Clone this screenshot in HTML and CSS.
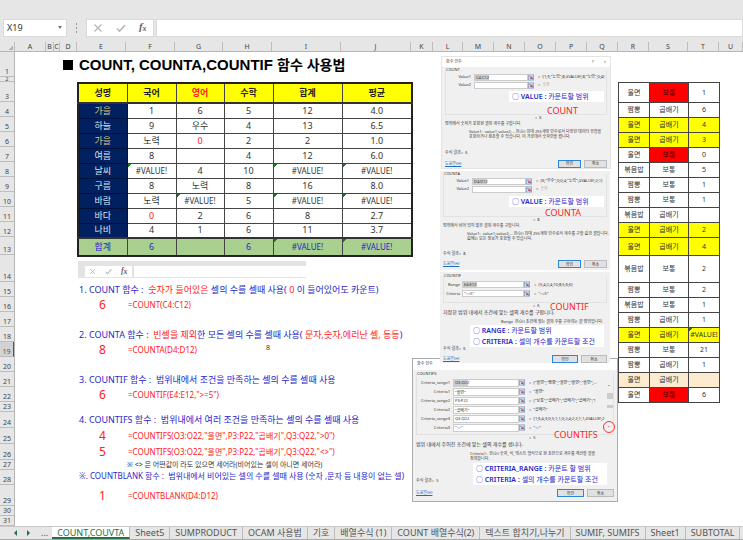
FILE: index.html
```html
<!DOCTYPE html>
<html lang="ko">
<head>
<meta charset="utf-8">
<title>COUNT, COUNTA, COUNTIF 함수 사용법</title>
<link rel="stylesheet" href="styles.css">
</head>
<body>
<svg class="defs" aria-hidden="true">
  <symbol id="cancel" viewBox="0 0 10 10"><path d="M1.5 1.5l7 7M8.500 1.500l-7 7" fill="none" stroke="#b4b4b4" stroke-width="1.200"/></symbol>
  <symbol id="enter" viewBox="0 0 10 10"><path d="M1 5.500l2.600 2.700L9.200 2" fill="none" stroke="#b4b4b4" stroke-width="1.500"/></symbol>
  <symbol id="ref" viewBox="0 0 8 8"><rect x=".5" y=".5" width="7" height="7" fill="#d5e0ef" stroke="#7f9fc4"/><path d="M2 2l3 3M5.300 2.800v2.500H2.800" stroke="#b5404a" stroke-width="1.200" fill="none"/><path d="M5 6h2" stroke="#3a66a8"/></symbol>
</svg>
<div class="app">
  <header class="bar">
    <label class="namebox"><input aria-label="이름 상자" value="X19"><span class="caret"></span></label>
    <span class="grip"></span>
    <div class="tools">
      <button aria-label="취소"><svg><use href="#cancel"/></svg></button>
      <button aria-label="입력"><svg><use href="#enter"/></svg></button>
      <button class="fx" aria-label="함수 삽입">f<sub>x</sub></button>
    </div>
    <input class="formula" aria-label="수식 입력줄">
  </header>

  <div class="cols">
    <span class="corner"></span><span>A</span><span>B</span><span>C</span><span>D</span><span>E</span><span>F</span><span>G</span><span>H</span><span>I</span><span>J</span><span>K</span><span>L</span><span>M</span><span>N</span><span>O</span><span>P</span><span>Q</span><span>R</span><span>S</span><span>T</span><span>U</span>
  </div>

  <main class="sheet">
    <div class="rows">
      <span>1</span><span class="thin">2</span><span>3</span><span>4</span><span>5</span><span>6</span><span>7</span><span>8</span><span>9</span><span>10</span><span>11</span><span>12</span><span>13</span><span>14</span><span>15</span><span>16</span><span>17</span><span>18</span><span class="current">19</span><span>20</span><span>21</span><span>22</span><span>23</span><span>24</span><span>25</span><span>26</span><span>27</span><span>28</span><span>29</span><span>30</span><span>31</span>
    </div>

    <h1><i></i><span>COUNT, COUNTA,COUNTIF <small>함수 사용법</small></span></h1>

    <table class="scores">
      <colgroup><col class="c-e"><col class="c-f"><col class="c-g"><col class="c-h"><col class="c-i"><col class="c-j"></colgroup>
      <thead><tr class="tall"><th>성명</th><th>국어</th><th class="red">영어</th><th>수학</th><th>합계</th><th>평균</th></tr></thead>
      <tbody>
        <tr><th class="gold">가을</th><td>1</td><td>6</td><td>5</td><td>12</td><td>4.0</td></tr>
        <tr><th>하늘</th><td>9</td><td>우수</td><td>4</td><td>13</td><td>6.5</td></tr>
        <tr><th class="gold">가을</th><td>노력</td><td class="red">0</td><td>2</td><td>2</td><td>1.0</td></tr>
        <tr><th>여름</th><td>8</td><td></td><td>4</td><td>12</td><td>6.0</td></tr>
        <tr><th>날씨</th><td class="err">#VALUE!</td><td>4</td><td>10</td><td class="err">#VALUE!</td><td class="err">#VALUE!</td></tr>
        <tr><th>구름</th><td>8</td><td>노력</td><td>8</td><td>16</td><td>8.0</td></tr>
        <tr><th>바람</th><td>노력</td><td class="err">#VALUE!</td><td>5</td><td class="err">#VALUE!</td><td class="err">#VALUE!</td></tr>
        <tr><th>바다</th><td class="red">0</td><td>2</td><td>6</td><td>8</td><td>2.7</td></tr>
        <tr><th>나비</th><td>4</td><td>1</td><td>6</td><td>11</td><td>3.7</td></tr>
      </tbody>
      <tfoot><tr class="mid"><th>합계</th><td>6</td><td></td><td>6</td><td class="err">#VALUE!</td><td class="err">#VALUE!</td></tr></tfoot>
    </table>

    <div class="minibar">
      <div><svg><use href="#cancel"/></svg><svg><use href="#enter"/></svg><em>f<sub>x</sub></em></div>
      <span></span>
    </div>

    <p class="note r15">1. COUNT 함수 :  <b>숫자가 들어있은</b> 셀의 수를 셀때 사용( <b>0</b> 이 들어있어도 카운트)</p>
    <p class="result r16"><strong>6</strong><span>=COUNT(C4:C12)</span></p>
    <p class="note r18">2. COUNTA 함수 :  <b>빈셀을 제외</b>한 모든 셀의 수를 셀때 사용( <b>문자,숫자,에러난 셀, 등등</b>)</p>
    <p class="result r19"><strong>8</strong><span>=COUNTA(D4:D12)</span></p>
    <p class="stray r19">8</p>
    <p class="note r21">3. COUNTIF 함수 :  범위내에서 조건을 만족하는 셀의 수를 셀때 사용</p>
    <p class="result r22"><strong>6</strong><span>=COUNTIF(E4:E12,"&gt;=5")</span></p>
    <p class="note r24">4. COUNTIFS 함수 :  범위내에서 여러 조건을 만족하는 셀의 수를 셀때 사용</p>
    <p class="result r25"><strong>4</strong><span>=COUNTIFS(O3:O22,"울면",P3:P22,"곱배기",Q3:Q22,"&gt;0")</span></p>
    <p class="result r26"><strong>5</strong><span>=COUNTIFS(O3:O22,"울면",P3:P22,"곱배기",Q3:Q22,"&lt;&gt;")</span></p>
    <p class="remark r27">※ &lt;&gt; 은 어떤값이 라도 있으면 세어라(비어있는 셀이 아니면 세어라)</p>
    <p class="note small r28">※. COUNTBLANK 함수 :  범위내에서 비어있는 셀의 수를 셀때 사용 (숫자 ,문자 등 내용이 없는 셀)</p>
    <p class="result r29"><strong>1</strong><span>=COUNTBLANK(D4:D12)</span></p>

    <div class="dialogs">
      <section class="dialog count">
        <div class="caption"><span>함수 인수</span><span>?</span><span>×</span></div>
        <fieldset>
          <legend>COUNT</legend>
          <div class="arg"><label for="a1">Value1</label><input id="a1" class="sel" value="C4:C12"><svg><use href="#ref"/></svg><output>=&nbsp; {1;9;"노력";8;#VALUE!;8;"노력";0;4}</output></div>
          <div class="arg"><label for="a2">Value2</label><input id="a2"><svg><use href="#ref"/></svg><output>=&nbsp; <i>숫자</i></output></div>
        </fieldset>
        <p class="equals">=&nbsp; 6</p>
        <p>범위에서 숫자가 포함된 셀의 개수를 구합니다.</p>
        <p class="help">Value1:&nbsp; value1;value2;... 은(는) 최대 255개의 인수로서 다양한 데이터 유형을<br>포함하거나 참조할 수 있습니다. 이 가운데서 숫자만을 셉니다.</p>
        <p class="answer">수식 결과=&nbsp; 6</p>
        <div class="foot"><a href="#">도움말(H)</a><button class="ok">확인</button><button>취소</button></div>
        <div class="tip">○ <b>VALUE :</b> 카운트할 범위</div>
        <div class="fname">COUNT</div>
      </section>

      <section class="dialog counta">
        <fieldset>
          <legend>COUNTA</legend>
          <div class="arg"><label for="b1">Value1</label><input id="b1" class="sel" value="D4:D12"><svg><use href="#ref"/></svg><output>=&nbsp; {6;"우수";0;0;4;"노력";#VALUE!;2;1}</output></div>
          <div class="arg"><label for="b2">Value2</label><input id="b2"><svg><use href="#ref"/></svg><output>=&nbsp; <i>숫자</i></output></div>
        </fieldset>
        <p class="equals">=&nbsp; 8</p>
        <p>범위에서 비어 있지 않은 셀의 개수를 구합니다.</p>
        <p class="help">Value1:&nbsp; value1;value2;... 은(는) 최대 255개의 인수로서 개수를 구할 값과 셀입니다.<br>값에는 모든 정보가 포함될 수 있습니다.</p>
        <p class="answer">수식 결과=&nbsp; 8</p>
        <div class="foot"><a href="#">도움말(H)</a><button class="ok">확인</button><button>취소</button></div>
        <div class="tip">○ <b>VALUE :</b> 카운트할 범위</div>
        <div class="fname">COUNTA</div>
      </section>

      <section class="dialog countif">
        <fieldset>
          <legend>COUNTIF</legend>
          <div class="arg"><label for="c1">Range</label><input id="c1" class="sel" value="E4:E12"><svg><use href="#ref"/></svg><output>=&nbsp; {5;4;2;4;10;8;5;6;6}</output></div>
          <div class="arg"><label for="c2">Criteria</label><input id="c2" value='"&gt;=5"'><svg><use href="#ref"/></svg><output>=&nbsp; "&gt;=5"</output></div>
        </fieldset>
        <p class="equals">=&nbsp; 6</p>
        <p class="desc">지정한 범위 내에서 조건에 맞는 셀의 개수를 구합니다.</p>
        <p class="help">Range&nbsp; 은(는) 조건에 맞는 셀의 수를 구하려는 셀 범위입니다.</p>
        <p class="answer">수식 결과=&nbsp; 6</p>
        <div class="foot"><a href="#">도움말(H)</a><button class="ok">확인</button><button>취소</button></div>
        <div class="tip">○ <b>RANGE :</b> 카운트할 범위<br>○ <b>CRITERIA :</b> 셀의 개수를 카운트할 조건</div>
        <div class="fname">COUNTIF</div>
      </section>

      <section class="dialog countifs">
        <div class="caption"><span>함수 인수</span></div>
        <fieldset>
          <legend>COUNTIFS</legend>
          <div class="arg"><label for="d1">Criteria_range1</label><input id="d1" class="sel" value="O3:O22"><svg><use href="#ref"/></svg><output>=&nbsp; {"울면";"짬뽕";"울면";"울면";"울면";...</output></div>
          <div class="arg"><label for="d2">Criteria1</label><input id="d2" value='"울면"'><svg><use href="#ref"/></svg><output>=&nbsp; "울면"</output></div>
          <div class="arg"><label for="d3">Criteria_range2</label><input id="d3" value="P3:P22"><svg><use href="#ref"/></svg><output>=&nbsp; {"보통";"곱배기";"곱배기";"곱배기";"!</output></div>
          <div class="arg"><label for="d4">Criteria2</label><input id="d4" value='"곱배기"'><svg><use href="#ref"/></svg><output>=&nbsp; "곱배기"</output></div>
          <div class="arg"><label for="d5">Criteria_range3</label><input id="d5" value="Q3:Q22"><svg><use href="#ref"/></svg><output>=&nbsp; {1;6;4;3;0;5;1;1;0;2;4;2;2;1;1;#VALUE!;2</output></div>
          <div class="arg"><label for="d6">Criteria3</label><input id="d6" value='"&lt;&gt;"'><svg><use href="#ref"/></svg><output>=&nbsp; "&lt;&gt;"</output></div>
          <div class="scroll"><span>⌃</span><i></i><i class="low"></i><span>⌄</span></div>
        </fieldset>
        <p class="equals">=&nbsp; 5</p>
        <p class="desc">범위 내에서 주어진 조건에 맞는 셀의 개수를 셉니다.</p>
        <p class="help">Criteria1:&nbsp; 은(는) 숫자, 식, 텍스트 형식으로 된 조건으로 개수를 계산할 셀을<br>정의합니다.</p>
        <p class="answer">수식 결과=&nbsp; 5</p>
        <div class="foot"><a href="#">도움말(H)</a><button class="ok">확인</button><button>취소</button></div>
        <div class="tip">○ <b>CRITERIA_RANGE :</b> 카운트 할 범위<br>○ <b>CRITERIA :</b> 셀의 개수를 카운트할 조건</div>
        <div class="fname">COUNTIFS</div>
        <div class="ring"></div>
      </section>
    </div>

    <table class="orders">
      <colgroup><col class="c-r"><col class="c-s"><col class="c-t"></colgroup>
      <tbody>
        <tr class="tall"><td>울면</td><td class="hot">보통</td><td>1</td></tr>
        <tr><td>짬뽕</td><td>곱배기</td><td>6</td></tr>
        <tr class="hit"><td>울면</td><td>곱배기</td><td>4</td></tr>
        <tr class="hit"><td>울면</td><td>곱배기</td><td>3</td></tr>
        <tr><td>울면</td><td class="hot">보통</td><td>0</td></tr>
        <tr><td>볶음밥</td><td>보통</td><td>5</td></tr>
        <tr><td>짬뽕</td><td>보통</td><td>1</td></tr>
        <tr><td>짬뽕</td><td>보통</td><td>1</td></tr>
        <tr><td>볶음밥</td><td>곱배기</td><td></td></tr>
        <tr class="hit"><td>울면</td><td>곱배기</td><td>2</td></tr>
        <tr class="hit mid"><td>울면</td><td>곱배기</td><td>4</td></tr>
        <tr class="high"><td>볶음밥</td><td>보통</td><td>2</td></tr>
        <tr><td>짬뽕</td><td>보통</td><td>2</td></tr>
        <tr><td>볶음밥</td><td>보통</td><td>1</td></tr>
        <tr><td>짬뽕</td><td>곱배기</td><td>1</td></tr>
        <tr class="hit"><td>울면</td><td>곱배기</td><td class="err">#VALUE!</td></tr>
        <tr><td>짬뽕</td><td>보통</td><td>21</td></tr>
        <tr><td>짬뽕</td><td>곱배기</td><td>1</td></tr>
        <tr class="pale"><td>울면</td><td>곱배기</td><td></td></tr>
        <tr><td>울면</td><td class="hot">보통</td><td>6</td></tr>
      </tbody>
    </table>
  </main>

  <nav class="tabs">
    <button class="prev" aria-label="이전 시트"></button><button class="next" aria-label="다음 시트"></button><span class="more">...</span>
    <a href="#" class="active">COUNT,COUVTA</a><a href="#">Sheet5</a><a href="#">SUMPRODUCT</a><a href="#">OCAM 사용법</a><a href="#">기호</a><a href="#">배열수식 (1)</a><a href="#">COUNT 배열수식(2)</a><a href="#">텍스트 합치기,나누기</a><a href="#">SUMIF, SUMIFS</a><a href="#">Sheet1</a><a href="#">SUBTOTAL</a>
  </nav>
</div>
</body>
</html>
```
FILE: styles.css
```css
* { box-sizing: border-box; }
body {
  margin: 0;
  background: #e6e6e6;
  color: #333;
  font: 9px/12px "Noto Sans", "Noto Sans CJK KR", sans-serif;
}
p, h1, fieldset { margin: 0; padding: 0; border: 0; min-width: 0; }
button, input { font: inherit; color: inherit; margin: 0; padding: 0; border: 0; background: none; min-width: 0; }
.defs { display: none; }
.app {
  --grid: 15px 31fr 8fr 6fr 17fr 49fr 49fr 48fr 49fr 69fr 70fr 22fr 30fr 31fr 31fr 31fr 31fr 31fr 31fr 39fr 31fr 24fr;
  overflow: hidden;
}

/* Formula bar */
.bar { display: flex; align-items: center; height: 42px; padding: 13px 0 0 3px; }
.bar > * { height: 18px; }
.namebox { display: flex; align-items: center; width: 64px; background: #fff; border: 1px solid #dadada; }
.namebox input { width: 48px; padding-left: 3px; font-size: 9px; }
.caret { border: 2px solid transparent; border-top: 3px solid #777; margin: 2px 0 0 6px; }
.bar .grip { width: 19px; height: 12px; background: radial-gradient(circle, #999 1px, transparent 1px) center / 19px 4px; }
.tools { display: flex; width: 68px; background: #fff; border: 1px solid #dadada; align-items: center; justify-content: space-around; }
.tools svg { width: 10px; height: 10px; display: block; }
.fx, .minibar em { font: italic bold 11px/12px "Liberation Serif", serif; color: #666; }
.fx sub, .minibar sub { font-size: 8px; vertical-align: -1px; }
.formula { flex: 1; margin-left: 2px; background: #fff; border: 1px solid #dadada; }

/* Column and row headings */
.cols { display: grid; grid-template-columns: var(--grid); height: 10px; border-bottom: 1px solid #b5b5b5; font-size: 7px; line-height: 9px; text-align: center; color: #444; }
.cols span { border-right: 1px solid #bdbdbd; min-width: 0; }
.corner { background: linear-gradient(135deg, transparent 60%, #b0b0b0 60%) 7px 3px / 6px 5px no-repeat; }
.sheet {
  display: grid;
  grid-template-columns: var(--grid);
  grid-template-rows: 25px 5px 20px repeat(9, 15px) 18px 27px repeat(8, 15px) 10px repeat(3, 16px) 10px 15px 21px 10px 10px;
  background: #fff;
}
.rows { grid-area: 1 / 1 / -1 / 2; display: grid; grid-template-rows: subgrid; background: #e6e6e6; border-right: 1px solid #b5b5b5; }
.rows span { display: flex; align-items: flex-end; justify-content: center; border-bottom: 1px solid #bdbdbd; font-size: 7px; line-height: 8px; color: #444; }
.rows .thin { font-size: 5px; line-height: 4px; }
.rows .current { background: #d2d2d2; color: #217346; border-right: 1px solid #217346; }

h1 { grid-area: 1 / 5 / 2 / 12; padding-left: 3px; display: flex; align-items: center; gap: 6px; white-space: nowrap; font: bold 15px/20px "Liberation Sans", "Noto Sans CJK KR", sans-serif; color: #000; }
h1 i { width: 10px; height: 10px; background: #000; }
h1 small { font-size: 14px; }

/* Tables */
table { border-collapse: collapse; table-layout: fixed; width: 100%; text-align: center; }
tr { height: 15px; }
tr.tall { height: 20px; }
tr.mid { height: 18px; }
tr.high { height: 27px; }
td, th { padding: 0; border: 1px solid #444; line-height: 12px; white-space: nowrap; }
.scores { grid-area: 3 / 6 / 14 / 12; font-size: 9px; border: 2px solid #222; }
.c-e, .c-f, .c-h { width: 49px; }
.c-g { width: 48px; }
.c-i { width: 69px; }
.c-j { width: 70px; }
.scores thead th { background: #ff0; color: #222; border-bottom: 2px solid #333; }
.scores tbody th { background: #002060; color: #dfe3ee; font-weight: 400; border-color: #00103a; }
.scores tbody .gold { color: #d8c583; }
.scores thead .red, td.red { color: #ff2020; }
.scores tfoot th, .scores tfoot td { background: #a9d08e; color: #2727c8; font-weight: 400; border-top: 2px solid #333; }
.err { font-size: 8px; background-image: linear-gradient(135deg, #1c7a1c 50%, transparent 50%); background-size: 4px 4px; background-repeat: no-repeat; }
.scores tfoot .err { background: linear-gradient(135deg, #1c7a1c 50%, transparent 50%) 0 0 / 4px 4px no-repeat #a9d08e; }
.orders { grid-area: 3 / 19 / 23 / 22; font-size: 7px; }
.orders .err { font-size: 7px; }
.c-r, .c-t { width: 31px; }
.c-s { width: 39px; }
.hit td { background-color: #ff0; }
.hot { background: #f00; color: #400; }
.pale td { background: #fdebd0; }

/* Notes */
.minibar { grid-area: 14 / 6 / 15 / 11; display: flex; gap: 2px; height: 17px; width: 228px; margin: 6px 0 0 1px; padding: 5px 0 1px 7px; background: #e3e3e3; }
.minibar div { display: flex; width: 47px; align-items: center; justify-content: space-around; background: #fff; }
.minibar svg { width: 7px; height: 7px; }
.minibar em { font-size: 8px; line-height: 10px; }
.minibar span { flex: 1; background: #fff; }
.note, .result, .remark { grid-column: 6 / 12; align-self: center; white-space: pre; }
.note { padding-left: 2px; color: #2727c8; }
.note b { font-weight: 400; color: #ff2020; }
.note.small { font-size: 8px; align-self: start; }
.result { display: flex; align-items: center; color: #ff2020; font-size: 8px; }
.result strong { width: 51px; text-align: center; font-weight: 400; font-size: 12px; line-height: 14px; }
.remark { padding-left: 50px; font-size: 7px; line-height: 10px; }
.stray { grid-column: 9 / 11; padding-left: 43px; font-size: 7px; }
.r15 { grid-row: 15; } .r16 { grid-row: 16; } .r18 { grid-row: 18; } .r19 { grid-row: 19; }
.r21 { grid-row: 21; } .r22 { grid-row: 22; } .r24 { grid-row: 24; } .r25 { grid-row: 25; }
.r26 { grid-row: 26; } .r27 { grid-row: 27; } .r28 { grid-row: 28; } .r29 { grid-row: 29; }

/* Dialog pictures laid over the cells */
.dialogs { grid-area: 1 / 12 / -1 / 19; padding-top: 4px; font-size: 4px; line-height: 6px; }
.dialog { position: relative; z-index: 1; display: flex; flex-direction: column; width: 170px; margin-left: 30px; padding: 0 3px; background: #f0f0f0; white-space: nowrap; }
.caption { display: flex; gap: 10px; height: 10px; line-height: 9px; margin: 0 -3px; padding: 0 4px; background: #fff; }
.caption span:first-child { flex: 1; }
fieldset { position: relative; border: 1px solid #e2e2e2; border-top: 0; height: 48px; }
legend { padding: 0; line-height: 6px; }
.arg { display: flex; align-items: center; height: 8px; }
.arg > * { flex: none; }
.arg label { width: 25px; text-align: right; margin-right: 3px; }
.arg input { width: 54px; height: 7px; padding-left: 1px; background: #fff; border: 1px solid #ccc; line-height: 5px; }
.arg .sel { background: linear-gradient(#ccc, #ccc) 0 0 / 14px 6px no-repeat #fff; }
.arg svg { width: 6px; height: 7px; margin-right: 4px; }
.arg output { flex: 1; overflow: hidden; }
.arg i { color: #aaa; font-style: normal; }
.equals { padding-left: 90px; }
.desc { font-size: 5px; }
.help { padding-left: 24px; margin-top: 2px; line-height: 5px; }
.answer { margin-top: auto; }
.foot { display: flex; gap: 3px; height: 12px; align-items: center; margin-top: 1px; }
.foot a { flex: 1; color: #1a6fc4; }
.foot button { width: 23px; height: 8px; background: #e1e1e1; border: 1px solid #bbb; line-height: 5px; }
.foot .ok { border-color: #2a86d8; }
.count { height: 113px; border: 1px solid #e4e4e4; }
.count .foot { height: 9px; margin-top: 3px; }
.counta { height: 101px; margin-left: 29px; border-top: 2px solid #fff; }
.counta fieldset { height: 46px; }
.countif { height: 93px; margin-left: 29px; border-top: 2px solid #fff; }
.countif fieldset { height: 31px; }
.countif legend, .countifs legend { line-height: 8px; }
.countif .arg, .countifs .arg { height: 9px; }
.countif .arg label { width: 16px; margin-right: 2px; }
.countif .arg input { width: 62px; }
.countif .help { padding-left: 58px; margin-top: 4px; }
.countif .foot { height: 8px; margin-top: 3px; }
.countif .foot button { width: 26px; }
.countifs { z-index: 0; width: 206px; height: 144px; margin: -5px 0 0 1px; border: 1px solid #aaa; padding: 0 3px; }
.countifs .caption { height: 11px; }
.countifs fieldset { height: 65px; }
.countifs .arg label { width: 33px; }
.countifs .arg input { width: 66px; height: 8px; }
.countifs .arg output { margin-right: 7px; }
.countifs .equals { padding-left: 113px; }
.countifs .help { padding-left: 54px; margin-top: 4px; }
.countifs .foot { height: 16px; }
.countifs .foot button { width: 27px; }
.scroll { position: absolute; right: 0; top: 6px; bottom: 3px; width: 6px; display: flex; flex-direction: column; gap: 3px; }
.scroll i { height: 6px; background: #ccc; }
.scroll .low { height: 3px; margin-top: 3px; }
.scroll span:last-child { margin-top: auto; }
.tip { position: absolute; right: 6px; top: 34px; width: 95px; padding-left: 3px; background: #fff; color: #2727c8; font-size: 7px; line-height: 11px; }
.tip b { font-weight: 600; }
.fname { position: absolute; left: 105px; top: 48px; color: #ff2020; font-size: 9px; line-height: 12px; }
.counta .tip { top: 25px; }
.counta .fname { top: 36px; }
.countif .tip { top: 53px; width: 134px; }
.countif .fname { left: 110px; top: 29px; }
.countifs .tip { right: 10px; top: 104px; width: 134px; }
.countifs .fname { left: 141px; top: 70px; }
.ring { position: absolute; right: 2px; top: 62px; width: 12px; height: 12px; border: 1px solid #f33; border-radius: 50%; }

/* Sheet tabs */
.tabs { display: flex; height: 14px; border-top: 1px solid #c8c8c8; border-bottom: 1px solid #aaa; color: #555; white-space: nowrap; line-height: 12px; }
.tabs a { color: inherit; text-decoration: none; padding: 0 5px; border-right: 1px solid #bbb; }
.tabs .active { background: #fff; color: #217346; border-bottom: 2px solid #217346; line-height: 11px; }
.tabs button { align-self: center; border: 3px solid transparent; }
.tabs .prev { margin-left: 11px; border-right-color: #217346; }
.tabs .next { margin-left: 10px; border-left-color: #217346; }
.more { padding: 0 4px 0 8px; }
```
